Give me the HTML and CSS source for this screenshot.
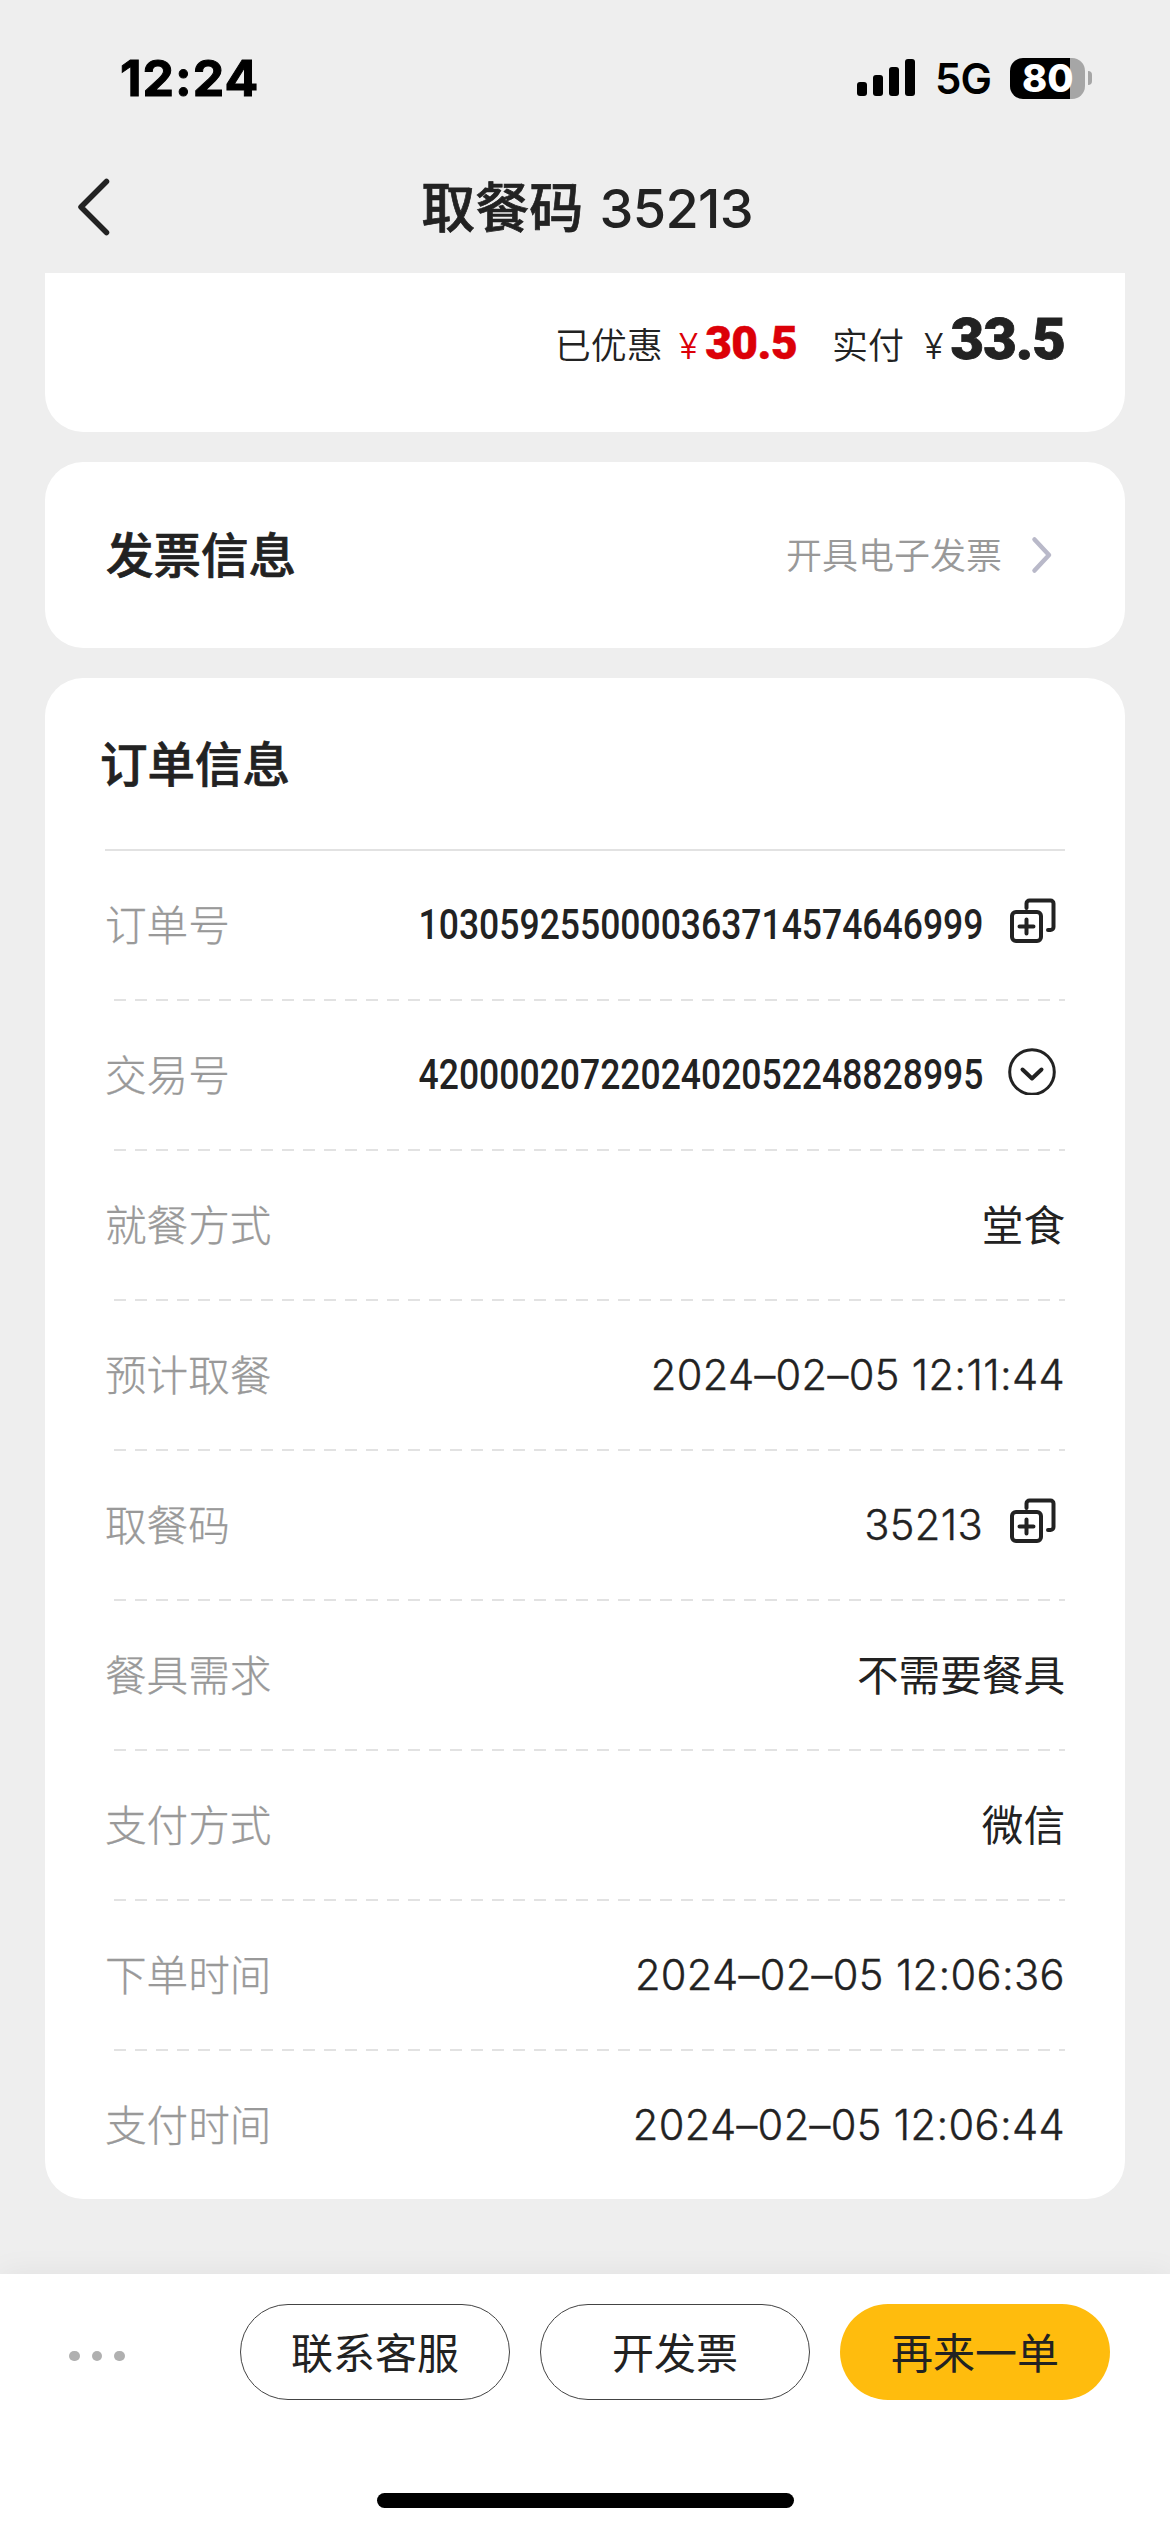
FILE: index.html
```html
<!DOCTYPE html>
<html lang="zh-CN">
<head>
    <title>取餐码 35213</title>
    <meta name="viewport" content="width=device-width, initial-scale=1">
    <meta charset="UTF-8">
    <link rel="stylesheet" href="styles.css">
</head>
<body>
    <div class="status-bar">
        <span class="time">12:24</span>
        <div class="status-icons">
            <svg class="signal" width="58" height="38" viewBox="0 0 58 38">
                <rect x="0" y="23" width="10" height="14" rx="3"/>
                <rect x="16" y="16" width="10" height="21" rx="3"/>
                <rect x="32" y="8" width="10" height="29" rx="3"/>
                <rect x="48" y="0" width="10" height="37" rx="3"/>
            </svg>
            <span class="network">5G</span>
            <div class="battery"><span>80</span></div>
            <div class="battery-tip"></div>
        </div>
    </div>

    <div class="nav">
        <svg class="back" width="34" height="60" viewBox="0 0 34 60">
            <path d="M30.500 4.500L5 30L30.500 55.500"/>
        </svg>
        <h1>取餐码 <span>35213</span></h1>
    </div>

    <div class="content">
        <div class="card total">
            <span class="text">已优惠</span>
            <span class="yen red">¥</span>
            <span class="discount">30.5</span>
            <span class="text paid">实付</span>
            <span class="yen">¥</span>
            <span class="amount">33.5</span>
        </div>

        <div class="card invoice">
            <h2>发票信息</h2>
            <span class="invoice-link">开具电子发票</span>
            <svg class="arrow" width="24" height="40" viewBox="0 0 24 40">
                <path d="M4.500 4.500L19 20L4.500 35.500"/>
            </svg>
        </div>

        <div class="card order">
            <h2>订单信息</h2>
            <div class="row">
                <span class="label">订单号</span>
                <span class="value din">1030592550000363714574646999</span>
                <svg class="icon" width="48" height="48" viewBox="0 0 48 48">
                    <rect x="4" y="15" width="29" height="29" rx="4"/>
                    <path d="M18.500 11V6.500a3 3 0 0 1 3-3H42.500a3 3 0 0 1 3 3V30a3 3 0 0 1-3 3H40"/>
                    <path d="M18.500 22.500v14M11.500 29.500h14"/>
                </svg>
            </div>
            <div class="row">
                <span class="label">交易号</span>
                <span class="value din">4200002072202402052248828995</span>
                <svg class="icon thin" width="48" height="48" viewBox="0 0 48 48">
                    <circle cx="24" cy="25" r="22.300"/>
                    <path class="tick" d="M14.500 22.500L24 31.500L33.500 22.500"/>
                </svg>
            </div>
            <div class="row">
                <span class="label">就餐方式</span>
                <span class="value">堂食</span>
            </div>
            <div class="row">
                <span class="label">预计取餐</span>
                <span class="value num">2024–02–05 12:11:44</span>
            </div>
            <div class="row">
                <span class="label">取餐码</span>
                <span class="value num">35213</span>
                <svg class="icon" width="48" height="48" viewBox="0 0 48 48">
                    <rect x="4" y="15" width="29" height="29" rx="4"/>
                    <path d="M18.500 11V6.500a3 3 0 0 1 3-3H42.500a3 3 0 0 1 3 3V30a3 3 0 0 1-3 3H40"/>
                    <path d="M18.500 22.500v14M11.500 29.500h14"/>
                </svg>
            </div>
            <div class="row">
                <span class="label">餐具需求</span>
                <span class="value">不需要餐具</span>
            </div>
            <div class="row">
                <span class="label">支付方式</span>
                <span class="value">微信</span>
            </div>
            <div class="row">
                <span class="label">下单时间</span>
                <span class="value num">2024–02–05 12:06:36</span>
            </div>
            <div class="row">
                <span class="label">支付时间</span>
                <span class="value num">2024–02–05 12:06:44</span>
            </div>
        </div>
    </div>

    <div class="footer">
        <div class="actions">
            <div class="more"><i></i><i></i><i></i></div>
            <button>联系客服</button>
            <button>开发票</button>
            <button class="primary">再来一单</button>
        </div>
        <div class="home-bar"></div>
    </div>
</body>
</html>
```
FILE: styles.css
```css
* {
    box-sizing: border-box;
}

body {
    font-family: Inter, 'Noto Sans CJK SC', sans-serif;
    margin: 0;
    width: 1170px;
    height: 2532px;
    display: flex;
    flex-direction: column;
    background: #eee;
    color: #222;
    overflow: hidden;
}

h1, h2 {
    margin: 0;
    font-weight: 500;
    white-space: nowrap;
    -webkit-text-stroke: 0.7px #222;
}

svg {
    flex: none;
    fill: none;
    stroke: #222;
    stroke-width: 4;
    stroke-linecap: round;
    stroke-linejoin: round;
}

/* status bar */
.status-bar {
    display: flex;
    justify-content: space-between;
    align-items: center;
    height: 141px;
    padding: 15px 78px 0 120px;
    color: #000;
}

.time {
    font-size: 50px;
    font-weight: 750;
    letter-spacing: 1px;
    -webkit-text-stroke: 1px #000;
}

.status-icons {
    display: flex;
    align-items: center;
}

.signal {
    fill: #000;
    stroke: none;
}

.network {
    margin: 1px 18px 0 20px;
    width: 57px;
    font-size: 42px;
    font-weight: 600;
    letter-spacing: -1px;
}

.battery {
    width: 75px;
    height: 41px;
    border-radius: 13px;
    background: linear-gradient(to right, #000 60px, #a6a6a6 60px);
    color: #fff;
    font-size: 38px;
    font-weight: 800;
    line-height: 41px;
    padding-left: 12px;
}

.battery-tip {
    width: 4px;
    height: 14px;
    margin-left: 3px;
    border-radius: 0 4px 4px 0;
    background: #a6a6a6;
}

/* title */
.nav {
    display: flex;
    align-items: center;
    height: 132px;
    padding: 0 76px;
}

.back {
    stroke-width: 5.5;
}

.nav h1 {
    flex: 1;
    margin: -5px 30px 0 0;
    font-size: 54px;
    text-align: center;
    word-spacing: 2px;
}

.nav h1 span {
    letter-spacing: -0.7px;
    -webkit-text-stroke: 0;
}

/* cards */
.content {
    flex: 1;
    padding: 0 45px;
}

.card {
    margin-bottom: 30px;
    border-radius: 38px;
    background: #fff;
}

.total {
    display: flex;
    justify-content: flex-end;
    align-items: baseline;
    height: 159px;
    padding: 32px 60px 0 0;
    border-radius: 0 0 38px 38px;
}

.text {
    font-size: 36px;
    font-weight: 350;
}

.yen {
    margin: 0 7px 0 20px;
    font-size: 36px;
    font-weight: 300;
}

.red {
    margin-left: 16px;
    color: #dc0008;
}

.discount {
    color: #dc0008;
    font-family: Roboto, sans-serif;
    font-size: 46px;
    font-weight: 900;
    letter-spacing: -0.5px;
    -webkit-text-stroke: 0.5px #dc0008;
}

.paid {
    margin-left: 35px;
}

.amount {
    font-family: Roboto, sans-serif;
    font-size: 58px;
    font-weight: 900;
    letter-spacing: -1px;
    -webkit-text-stroke: 0.8px #222;
}

.invoice {
    display: flex;
    align-items: center;
    height: 186px;
    padding: 0 71px 0 61px;
}

h2 {
    font-size: 47.5px;
}

.invoice h2 {
    margin-top: -5px;
}

.invoice-link {
    margin: -5px 28px 0 auto;
    color: #999;
    font-size: 36px;
    font-weight: 350;
}

.arrow {
    stroke: #b9b9c9;
    stroke-width: 4.5;
}

.order {
    height: 1521px;
    padding: 0 60px;
}

.order h2 {
    height: 171px;
    margin-left: -5px;
    line-height: 174px;
}

.row {
    display: flex;
    align-items: center;
    height: 150px;
    background: repeating-linear-gradient(to right, transparent 0 9px, #e2e2e2 9px 21px) top / 100% 2px no-repeat;
}

h2 + .row {
    background: linear-gradient(#e2e2e2, #e2e2e2) top / 100% 2px no-repeat;
}

.label {
    margin-top: -3px;
    color: #999;
    font-size: 41.6px;
    font-weight: 300;
    -webkit-text-stroke: 0.3px #999;
}

.value {
    margin-top: -3px;
    margin-left: auto;
    font-size: 41.6px;
}

.num {
    margin-top: 2px;
    font-weight: 350;
    letter-spacing: 0.35px;
    -webkit-text-stroke: 0.4px #222;
}

.din {
    margin-top: 0;
    font-family: Roboto, sans-serif;
    font-size: 42px;
    font-weight: 500;
    transform: scaleX(0.845);
    transform-origin: right;
}

.icon {
    margin: -6px 9px 0 25px;
}

.thin {
    stroke-width: 3;
}

.tick {
    stroke-width: 4;
}

/* bottom actions */
.footer {
    height: 258px;
    background: #fff;
    box-shadow: 0 0 30px rgba(0, 0, 0, 0.06);
}

.actions {
    display: flex;
    align-items: center;
    gap: 30px;
    padding: 30px 60px 0 69px;
}

.more {
    display: flex;
    gap: 12px;
    margin: 8px auto 0 0;
}

.more i {
    width: 10.5px;
    height: 10.5px;
    border-radius: 50%;
    background: #b0b0b0;
}

button {
    width: 270px;
    height: 96px;
    padding: 0 0 4px;
    border: 1px solid #444;
    border-radius: 48px;
    background: #fff;
    color: #222;
    font-family: inherit;
    font-size: 42px;
}

.primary {
    border: none;
    background: #ffbc0d;
}

.home-bar {
    width: 417px;
    height: 15px;
    margin: 93px auto 0;
    border-radius: 8px;
    background: #000;
}
```
